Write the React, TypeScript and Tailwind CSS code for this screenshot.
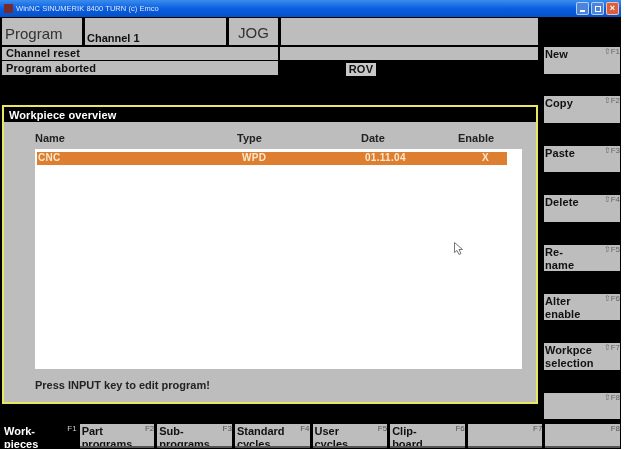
const font = { fontFamily: '"Liberation Sans", Arial, sans-serif' };

function SideKey({ label, f }: { label: string[]; f: string }) {
  return (
    <div className="relative h-[26.5px] w-[76px] bg-[#bdbdbd] pl-[1px] pt-[1px] text-[11px] leading-[13px] font-bold tracking-[0.1px] text-[#111]">
      {label.map((l) => (
        <div key={l}>{l}</div>
      ))}
      <span className="absolute right-0 top-0 text-[8px] leading-[10px] font-normal tracking-normal text-[#666]">⇧F{f}</span>
    </div>
  );
}

function BottomKey({ label, f, active }: { label: string[]; f: string; active?: boolean }) {
  return (
    <div
      className={`relative h-[24px] flex-1 overflow-hidden pl-[2px] pt-[1px] text-[11px] leading-[13px] font-bold ${
        active ? "bg-black text-white" : "border-b-2 border-[#555] bg-[#bdbdbd] text-[#111]"
      }`}
    >
      {label.map((l) => (
        <div key={l}>{l}</div>
      ))}
      <span className={`absolute right-0 top-0 text-[8px] leading-[10px] font-normal ${active ? "text-[#ccc]" : "text-[#555]"}`}>{f}</span>
    </div>
  );
}

export default function App() {
  const side = [
    { label: ["New"], f: "1" },
    { label: ["Copy"], f: "2" },
    { label: ["Paste"], f: "3" },
    { label: ["Delete"], f: "4" },
    { label: ["Re-", "name"], f: "5" },
    { label: ["Alter", "enable"], f: "6" },
    { label: ["Workpce", "selection"], f: "7" },
    { label: [""], f: "8" },
  ];
  const bottom = [
    { label: ["Work-", "pieces"], f: "F1", active: true },
    { label: ["Part", "programs"], f: "F2" },
    { label: ["Sub-", "programs"], f: "F3" },
    { label: ["Standard", "cycles"], f: "F4" },
    { label: ["User", "cycles"], f: "F5" },
    { label: ["Clip-", "board"], f: "F6" },
    { label: [""], f: "F7" },
    { label: [""], f: "F8" },
  ];
  return (
    <div className="h-[450px] w-[625px] overflow-hidden bg-white" style={font}>
      <div className="flex h-[449px] w-[621px] flex-col bg-black blur-[0.3px]">
        {/* title bar */}
        <div className="flex h-[17px] items-center bg-gradient-to-b from-[#3a8cec] via-[#0a5fe0] to-[#0750c8] pl-[4px] pr-[2px]">
          <div className="mr-[3px] h-[9px] w-[9px] bg-[#7a2a2a]" />
          <span className="text-[7.5px] tracking-[0.05px] text-[#dfe8f8]">WinNC SINUMERIK 8400 TURN (c) Emco</span>
          <div className="ml-auto flex gap-[2px]">
            <div className="flex h-[13px] w-[13px] items-end justify-center rounded-[2px] border border-white/60 bg-[#4a84dc] pb-[2px]">
              <div className="h-[2px] w-[5px] bg-white" />
            </div>
            <div className="flex h-[13px] w-[13px] items-center justify-center rounded-[2px] border border-white/60 bg-[#4a84dc]">
              <div className="h-[6px] w-[6px] border border-white" />
            </div>
            <div className="flex h-[13px] w-[13px] items-center justify-center rounded-[2px] border border-white/60 bg-[#d8603f] text-[9px] leading-none font-bold text-white">
              ×
            </div>
          </div>
        </div>

        {/* body */}
        <div className="flex h-[407px]">
          <div className="flex w-[538px] flex-col pl-[2px]">
            <div className="mt-[1px] flex h-[27px] gap-[3px]">
              <div className="flex w-[80px] items-center bg-[#bdbdbd] pl-[3px] pt-[5px] text-[15px] text-[#333]">Program</div>
              <div className="flex w-[141px] items-end bg-[#bdbdbd] pl-[2px] text-[11px] leading-[13px] font-bold text-[#111]">Channel 1</div>
              <div className="flex w-[49px] items-center justify-center bg-[#bdbdbd] pt-[4px] text-[15px] text-[#333]">JOG</div>
              <div className="flex-1 bg-[#bdbdbd]" />
            </div>
            <div className="mt-[2px] flex h-[13px] gap-[2px]">
              <div className="w-[276px] bg-[#bdbdbd] pl-[4px] text-[11px] leading-[13px] font-bold tracking-[0.1px] text-[#111]">Channel reset</div>
              <div className="flex-1 bg-[#bdbdbd]" />
            </div>
            <div className="mt-[1px] flex h-[15px]">
              <div className="h-[14px] w-[276px] bg-[#bdbdbd] pl-[4px] text-[11px] leading-[14px] font-bold tracking-[0.1px] text-[#111]">Program aborted</div>
              <div className="ml-[68px] mt-[2px] h-[13px] w-[30px] bg-[#c8c8c8] text-center text-[11px] leading-[13px] font-bold tracking-[0.3px] text-[#111]">ROV</div>
            </div>

            {/* panel */}
            <div className="mt-[29px] flex h-[299px] flex-col border-2 border-[#e8e860] bg-[#bdbdbd]">
              <div className="h-[15px] bg-black pl-[5px] pt-[2px] text-[11px] leading-[13px] font-bold tracking-[0.1px] text-white">Workpiece overview</div>
              <div className="mt-[9px] grid h-[14px] grid-cols-[202px_124px_97px_1fr] pl-[31px] text-[11px] leading-[14px] font-bold text-[#222]">
                <span>Name</span>
                <span>Type</span>
                <span>Date</span>
                <span>Enable</span>
              </div>
              <div className="relative ml-[31px] mt-[4px] h-[220px] w-[487px] bg-white pl-[2px] pt-[3px]">
                <div className="grid h-[13px] w-[470px] grid-cols-[204px_123px_117px_1fr] bg-[#dd7e30] pl-[1px] text-[10px] leading-[12px] font-bold tracking-[0.3px] text-[#f8e8d0]">
                  <span>CNC</span>
                  <span>WPD</span>
                  <span>01.11.04</span>
                  <span>X</span>
                </div>
                <svg className="absolute left-[419px] top-[93px]" width="10" height="14" viewBox="0 0 10 14">
                  <path d="M0.5 0.5 V10.5 L3 8.5 L5 12.5 L7 11.5 L5 7.5 H8.5 Z" fill="#fff" stroke="#777" strokeWidth="1" />
                </svg>
              </div>
              <div className="ml-[31px] mt-[10px] text-[11px] leading-[13px] font-bold text-[#222]">Press INPUT key to edit program!</div>
            </div>
          </div>

          <div className="ml-[6px] flex w-[76px] flex-col gap-[22.9px] pt-[30px]">
            {side.map((s) => (
              <SideKey key={s.f} label={s.label} f={s.f} />
            ))}
          </div>
        </div>

        {/* bottom keys */}
        <div className="flex gap-[3px] pl-[2px] pr-[1px]">
          {bottom.map((b) => (
            <BottomKey key={b.f} label={b.label} f={b.f} active={b.active} />
          ))}
        </div>
      </div>
    </div>
  );
}
